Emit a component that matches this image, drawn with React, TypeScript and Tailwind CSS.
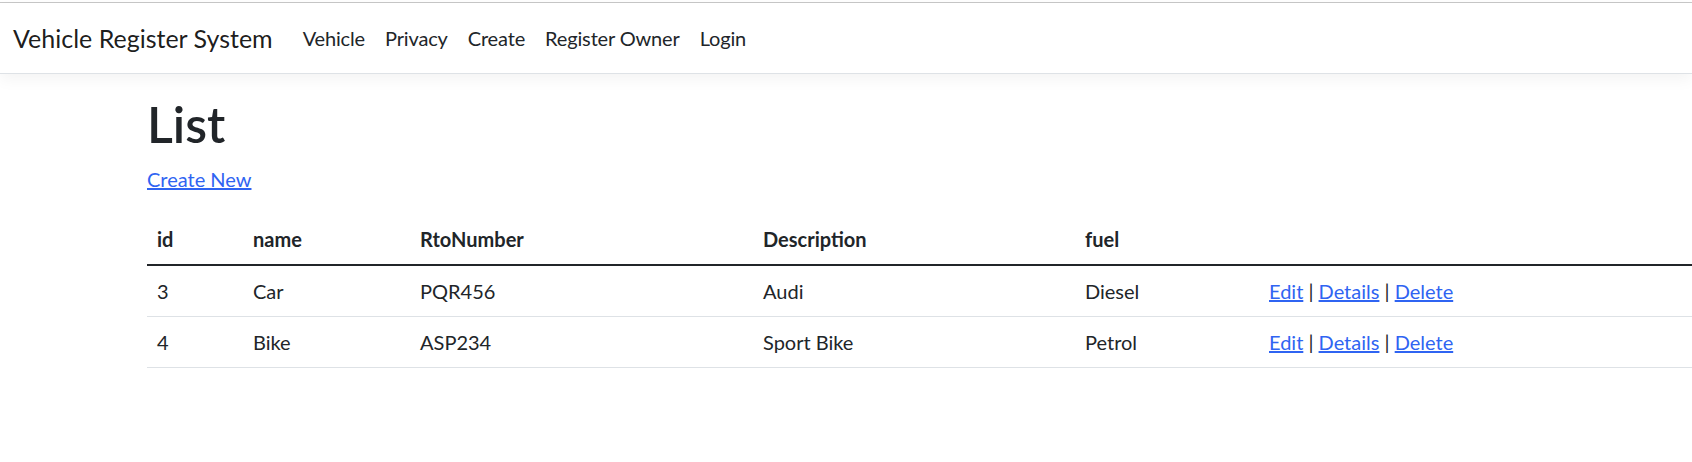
const rows = [
  { id: 3, name: 'Car', rto: 'PQR456', description: 'Audi', fuel: 'Diesel' },
  { id: 4, name: 'Bike', rto: 'ASP234', description: 'Sport Bike', fuel: 'Petrol' },
];

const navLinks = ['Vehicle', 'Privacy', 'Create', 'Register Owner', 'Login'];

function Actions() {
  return (
    <span>
      <a href="#" className="text-[#2f64f2] underline">Edit</a>
      {' | '}
      <a href="#" className="text-[#2f64f2] underline">Details</a>
      {' | '}
      <a href="#" className="text-[#2f64f2] underline">Delete</a>
    </span>
  );
}

export default function App() {
  return (
    <div className="min-h-[462px] bg-white text-[#212529] font-['Lato','Liberation_Sans',sans-serif] overflow-hidden">
      <div className="h-[2px] bg-white" />
      <div className="h-px bg-[#c8c8c8]" />

      <header className="h-[71px] bg-white border-b border-[#dee2e6] shadow-[0_5px_15px_rgba(0,0,0,0.05)] flex items-center px-[13px]">
        <span className="text-[25px] leading-[38px] text-black/90 mr-[20px]">Vehicle Register System</span>
        <nav className="flex items-center">
          {navLinks.map((l) => (
            <a key={l} href="#" className="px-[10px] text-[20px] leading-[30px] tracking-[-0.15px] text-[#212529]">
              {l}
            </a>
          ))}
        </nav>
      </header>

      <main className="pl-[147px] pt-[20px]">
        <h1 className="text-[50px] leading-[60px] font-semibold mb-[10px]">List</h1>
        <p className="text-[20px] leading-[30px] mb-[20px]">
          <a href="#" className="text-[#2f64f2] underline">Create New</a>
        </p>

        <table className="w-full text-[20px] leading-[30px] border-collapse">
          <thead>
            <tr className="border-b-2 border-[#212529]">
              <th className="w-[96px] text-left font-bold p-[10px]">id</th>
              <th className="w-[167px] text-left font-bold p-[10px]">name</th>
              <th className="w-[343px] text-left font-bold p-[10px]">RtoNumber</th>
              <th className="w-[322px] text-left font-bold p-[10px]">Description</th>
              <th className="w-[184px] text-left font-bold p-[10px]">fuel</th>
              <th className="p-[10px]" />
            </tr>
          </thead>
          <tbody>
            {rows.map((r) => (
              <tr key={r.id} className="border-b border-[#dee2e6]">
                <td className="p-[10px]">{r.id}</td>
                <td className="p-[10px]">{r.name}</td>
                <td className="p-[10px]">{r.rto}</td>
                <td className="p-[10px]">{r.description}</td>
                <td className="p-[10px]">{r.fuel}</td>
                <td className="p-[10px]"><Actions /></td>
              </tr>
            ))}
          </tbody>
        </table>
      </main>
    </div>
  );
}
